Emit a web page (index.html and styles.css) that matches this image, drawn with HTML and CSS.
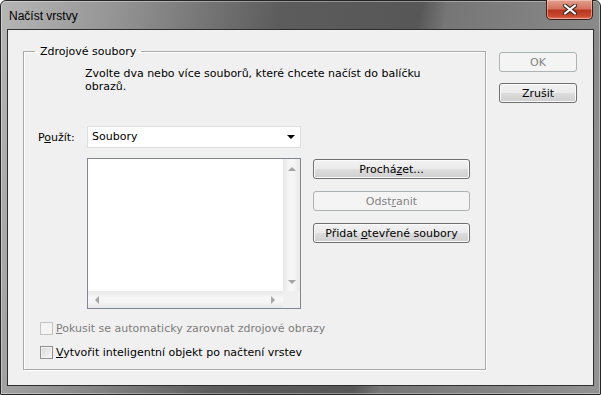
FILE: index.html
```html
<!DOCTYPE html>
<html lang="cs">
<head>
  <meta charset="UTF-8">
  <title>Načíst vrstvy</title>
  <link rel="stylesheet" href="styles.css">
</head>
<body>
  <div class="window">
    <div class="titlebar">
      <span class="title">Načíst vrstvy</span>
      <button class="close" aria-label="Zavřít">
        <svg width="14" height="11" viewBox="0 0 14 11">
          <path d="M2 1.5 L12 9.5 M12 1.5 L2 9.5" stroke="#3b2a26" stroke-width="4.2" stroke-linecap="round"/>
          <path d="M2 1.5 L12 9.5 M12 1.5 L2 9.5" stroke="#ffffff" stroke-width="2.2" stroke-linecap="round"/>
        </svg>
      </button>
    </div>
    <div class="client">
      <fieldset class="group">
        <legend>Zdrojové soubory</legend>
        <p class="hint">Zvolte dva nebo více souborů, které chcete načíst do balíčku<br>obrazů.</p>
        <div class="use-row">
          <label class="use-label">P<u>o</u>užít:</label>
          <div class="select">Soubory<span class="caret"></span></div>
        </div>
        <div class="files-row">
          <div class="listbox">
            <div class="list-body">
              <div class="list-area"></div>
              <div class="vscroll">
                <span class="arrow up"></span>
                <span class="arrow down"></span>
              </div>
            </div>
            <div class="hscroll-row">
              <div class="hscroll">
                <span class="arrow left"></span>
                <span class="arrow right"></span>
              </div>
              <div class="corner"></div>
            </div>
          </div>
          <div class="file-buttons">
            <button class="btn wide">Prochá<u>z</u>et...</button>
            <button class="btn wide" disabled>Odst<u>r</u>anit</button>
            <button class="btn wide">Přidat <u>o</u>tevřené soubory</button>
          </div>
        </div>
        <label class="check disabled"><span class="box"></span><span><u>P</u>okusit se automaticky zarovnat zdrojové obrazy</span></label>
        <label class="check"><span class="box"></span><span><u>V</u>ytvořit inteligentní objekt po načtení vrstev</span></label>
      </fieldset>
      <div class="side-buttons">
        <button class="btn side" disabled>OK</button>
        <button class="btn side">Zrušit</button>
      </div>
    </div>
  </div>
</body>
</html>
```

FILE: styles.css
```css
body {
  margin: 0;
  font-family: "DejaVu Sans", sans-serif;
  font-size: 11px;
  color: #000;
}
.window {
  width: 601px;
  height: 395px;
  box-sizing: border-box;
  border: 1px solid #262626;
  border-radius: 6px 6px 1px 1px;
  padding: 0 6px 8px;
  display: flex;
  flex-direction: column;
  background: linear-gradient(100deg, #b6b6b6 0%, #939393 18%, #5c5c5c 42%, #575757 63%, #767676 67%, #858585 85%, #939393 100%);
  box-shadow: inset 0 0 0 1px rgba(255, 255, 255, 0.35);
}
.titlebar {
  height: 28px;
  display: flex;
  align-items: flex-start;
}
.title {
  margin: 7px 0 0 2px;
  font-family: "Liberation Sans", sans-serif;
  font-size: 12px;
  line-height: 16px;
}
.close {
  margin: -1px 1px 0 auto;
  width: 47px;
  height: 20px;
  padding: 0;
  border: 1px solid #3c1e18;
  border-top: none;
  border-radius: 0 0 5px 5px;
  background: linear-gradient(#e3a08f 0%, #d4735f 45%, #b8361f 55%, #c8492f 85%, #e07a5e 100%);
  box-shadow: inset 0 0 0 1px rgba(255, 220, 210, 0.5);
  display: flex;
  align-items: center;
  justify-content: center;
}
.client {
  flex: 1;
  border: 1px solid #2f2f2f;
  background: #f0f0f0;
  display: flex;
  align-items: flex-start;
  padding: 15px 0 0 15px;
}
.group {
  margin: 0;
  width: 463px;
  box-sizing: border-box;
  padding: 0 14px 10px;
  border: 1px solid #a9a9a9;
  box-shadow: 1px 1px 0 #fff, inset 1px 1px 0 #fff;
}
.group legend {
  margin-left: -3px;
  padding: 0 5px;
  line-height: 13px;
}
.hint {
  margin: 9px 0 0 47px;
  line-height: 13px;
}
.use-row {
  display: flex;
  align-items: center;
  margin-top: 33px;
}
.use-label {
  width: 49px;
  line-height: 13px;
}
.select {
  position: relative;
  width: 214px;
  height: 22px;
  box-sizing: border-box;
  border: 1px solid #dedede;
  background: #fff;
  padding-left: 4px;
  line-height: 20px;
}
.caret {
  position: absolute;
  right: 5px;
  top: 8px;
  border-left: 4px solid transparent;
  border-right: 4px solid transparent;
  border-top: 4px solid #000;
}
.files-row {
  display: flex;
  align-items: flex-start;
  margin: 10px 0 0 49px;
}
.listbox {
  width: 214px;
  height: 151px;
  box-sizing: border-box;
  border: 1px solid #82878f;
  display: flex;
  flex-direction: column;
  background: #fff;
}
.list-body {
  flex: 1;
  display: flex;
}
.list-area {
  flex: 1;
}
.vscroll {
  width: 17px;
  display: flex;
  flex-direction: column;
  justify-content: space-between;
  align-items: center;
  padding: 8px 0 7px;
  background: linear-gradient(to right, #e8e8e8, #f6f6f6 40%, #f6f6f6 60%, #e8e8e8);
}
.hscroll-row {
  height: 17px;
  display: flex;
}
.hscroll {
  flex: 1;
  display: flex;
  justify-content: space-between;
  align-items: center;
  padding: 0 8px 0 7px;
  background: linear-gradient(#e8e8e8, #f6f6f6 40%, #f6f6f6 60%, #e8e8e8);
}
.corner {
  width: 17px;
  background: #f0f0f0;
}
.arrow {
  width: 0;
  height: 0;
}
.arrow.up {
  border-left: 4px solid transparent;
  border-right: 4px solid transparent;
  border-bottom: 4px solid #a5a5a5;
}
.arrow.down {
  border-left: 4px solid transparent;
  border-right: 4px solid transparent;
  border-top: 4px solid #a5a5a5;
}
.arrow.left {
  border-top: 4px solid transparent;
  border-bottom: 4px solid transparent;
  border-right: 4px solid #a5a5a5;
}
.arrow.right {
  border-top: 4px solid transparent;
  border-bottom: 4px solid transparent;
  border-left: 4px solid #a5a5a5;
}
.file-buttons {
  display: flex;
  flex-direction: column;
  gap: 12px;
  margin: 1px 0 0 12px;
}
.btn {
  font: inherit;
  height: 20px;
  padding: 0;
  color: #000;
  border: 1px solid #707070;
  border-radius: 3px;
  background: linear-gradient(#f2f2f2 0%, #ebebeb 48%, #dddddd 52%, #cfcfcf 100%);
  box-shadow: inset 0 0 0 1px #fbfbfb;
}
.btn:disabled {
  border-color: #adb2b5;
  background: #f4f4f4;
  color: #838383;
  box-shadow: none;
}
.btn.wide {
  width: 157px;
}
.side-buttons {
  display: flex;
  flex-direction: column;
  gap: 11px;
  margin: 7px 0 0 13px;
}
.btn.side {
  width: 78px;
}
.check {
  display: flex;
  align-items: center;
  gap: 3px;
  margin-left: 2px;
  line-height: 13px;
}
.check + .check {
  margin-top: 11px;
}
.files-row + .check {
  margin-top: 13px;
}
.box {
  width: 13px;
  height: 13px;
  box-sizing: border-box;
  border: 1px solid #8f8f8f;
  background: linear-gradient(135deg, #d8d8d8, #f7f7f7);
  box-shadow: inset 0 0 0 1px #f4f4f4;
}
.check.disabled {
  color: #7d7d7d;
}
.check.disabled .box {
  border-color: #c4c4c4;
  background: #f4f4f4;
  box-shadow: none;
}
```
